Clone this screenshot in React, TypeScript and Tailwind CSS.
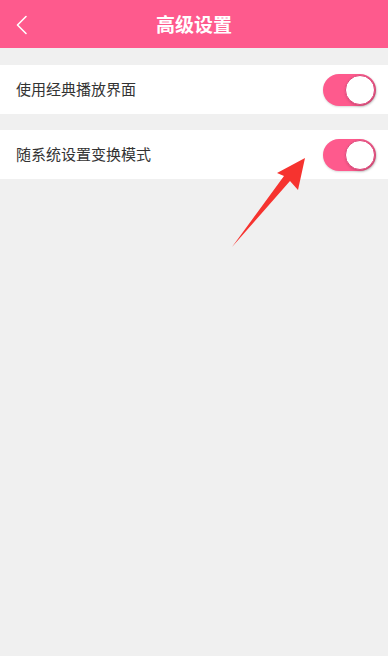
import React, { useState } from 'react'

function Toggle({ on, onChange }: { on: boolean; onChange: () => void }) {
  return (
    <button
      onClick={onChange}
      className={`relative w-[53px] h-[32px] rounded-full shadow-[0_1px_2px_rgba(0,0,0,0.15)] ${on ? 'bg-[#fe5a8d]' : 'bg-[#e5e5e5]'}`}
    >
      <span
        className={`absolute top-[1px] w-[30px] h-[30px] rounded-full bg-white border border-[#e0457a] shadow-[1px_1px_3px_rgba(0,0,0,0.25)] ${on ? 'left-[22px]' : 'left-[1px]'}`}
      />
    </button>
  )
}

function Row({ label, on, onChange }: { label: string; on: boolean; onChange: () => void }) {
  return (
    <div className="flex items-center justify-between h-[49px] bg-white pl-4 pr-3">
      <span className="text-[15px] text-[#333]">{label}</span>
      <Toggle on={on} onChange={onChange} />
    </div>
  )
}

export default function App() {
  const [classic, setClassic] = useState(true)
  const [followSystem, setFollowSystem] = useState(true)

  return (
    <div
      className="relative w-[388px] h-[656px] bg-[#f0f0f0] overflow-hidden"
      style={{ fontFamily: '"Noto Sans CJK SC", "Noto Sans", sans-serif' }}
    >
      <div className="relative flex items-center justify-center h-[48px] bg-[#fe5a8d]">
        <svg className="absolute left-[15px] top-[15px]" width="14" height="20" viewBox="0 0 14 20">
          <path d="M11 1.5 L2.5 10 L11 18.5" fill="none" stroke="#fff" strokeWidth="1.6" strokeLinecap="round" strokeLinejoin="round" />
        </svg>
        <span className="text-[19px] font-bold text-white">高级设置</span>
      </div>
      <div className="mt-[17px] flex flex-col gap-[16px]">
        <Row label="使用经典播放界面" on={classic} onChange={() => setClassic(!classic)} />
        <Row label="随系统设置变换模式" on={followSystem} onChange={() => setFollowSystem(!followSystem)} />
      </div>
      <svg className="absolute left-0 top-0 pointer-events-none" width="388" height="656">
        <polygon points="305,158 298,190 290,181 232,247 284,176 277,173" fill="#f6332f" />
      </svg>
    </div>
  )
}
